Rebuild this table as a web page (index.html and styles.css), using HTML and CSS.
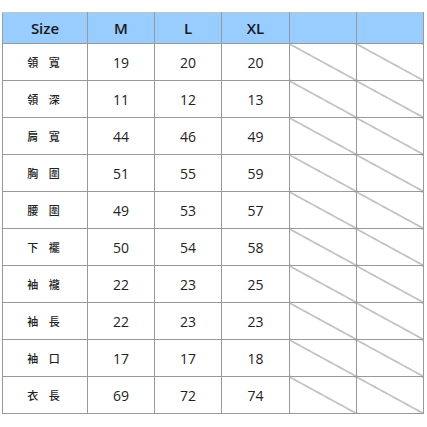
FILE: index.html
```html
<!DOCTYPE html>
<html>
<head>
<meta charset="utf-8">
<link rel="stylesheet" href="styles.css">
</head>
<body>
<table class="size-table">
  <colgroup>
    <col class="c-label"><col class="c-size"><col class="c-size"><col class="c-size3"><col class="c-size"><col class="c-size">
  </colgroup>
  <thead>
    <tr><th>Size</th><th>M</th><th>L</th><th>XL</th><th></th><th></th></tr>
  </thead>
  <tbody>
    <tr><td class="label">領 寬</td><td>19</td><td>20</td><td>20</td><td class="x"></td><td class="x"></td></tr>
    <tr><td class="label">領 深</td><td>11</td><td>12</td><td>13</td><td class="x"></td><td class="x"></td></tr>
    <tr><td class="label">肩 寬</td><td>44</td><td>46</td><td>49</td><td class="x"></td><td class="x"></td></tr>
    <tr><td class="label">胸 圍</td><td>51</td><td>55</td><td>59</td><td class="x"></td><td class="x"></td></tr>
    <tr><td class="label">腰 圍</td><td>49</td><td>53</td><td>57</td><td class="x"></td><td class="x"></td></tr>
    <tr><td class="label">下 襬</td><td>50</td><td>54</td><td>58</td><td class="x"></td><td class="x"></td></tr>
    <tr><td class="label">袖 襱</td><td>22</td><td>23</td><td>25</td><td class="x"></td><td class="x"></td></tr>
    <tr><td class="label">袖 長</td><td>22</td><td>23</td><td>23</td><td class="x"></td><td class="x"></td></tr>
    <tr><td class="label">袖 口</td><td>17</td><td>17</td><td>18</td><td class="x"></td><td class="x"></td></tr>
    <tr><td class="label">衣 長</td><td>69</td><td>72</td><td>74</td><td class="x"></td><td class="x"></td></tr>
  </tbody>
</table>
</body>
</html>
```
FILE: styles.css
```css
html, body {
  margin: 0;
  padding: 0;
  background: #fff;
}
body {
  padding: 12px 0 0 2px;
  font-family: "Open Sans", "DejaVu Sans", sans-serif;
  color: #222;
}
.size-table {
  border-collapse: collapse;
  table-layout: fixed;
  width: 422px;
}
.c-label { width: 85px; }
.c-size { width: 67px; }
.c-size3 { width: 68px; }
.size-table th,
.size-table td {
  border: 1px solid #999;
  padding: 0;
  text-align: center;
  vertical-align: middle;
}
.size-table thead tr {
  height: 31px;
}
.size-table th {
  background: #99ccff;
  border-top-color: #c4c4c4;
  font-size: 15px;
  font-weight: 600;
  color: #1a1a1a;
}
.size-table tbody tr {
  height: 37px;
}
.size-table td {
  font-size: 14px;
  color: #222;
}
.size-table td.label {
  font-family: "Noto Sans CJK TC", "Noto Sans CJK SC", sans-serif;
  font-size: 11px;
  font-weight: 500;
  word-spacing: 8px;
  color: #222;
  padding-right: 3px;
}
.size-table td.x {
  background: linear-gradient(to top right, transparent calc(50% - 0.7px), #666 50%, transparent calc(50% + 0.7px));
}
```
